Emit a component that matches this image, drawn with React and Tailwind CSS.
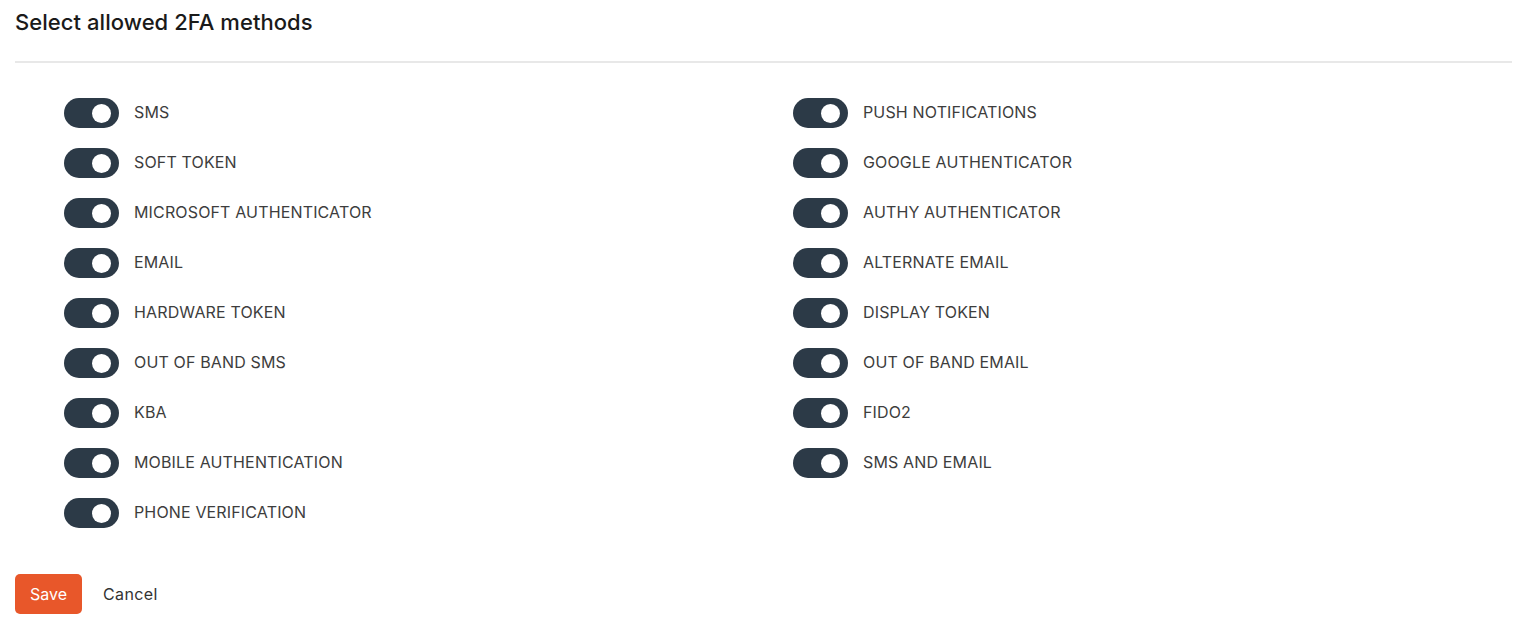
const left = [
  "SMS",
  "SOFT TOKEN",
  "MICROSOFT AUTHENTICATOR",
  "EMAIL",
  "HARDWARE TOKEN",
  "OUT OF BAND SMS",
  "KBA",
  "MOBILE AUTHENTICATION",
  "PHONE VERIFICATION",
]

const right = [
  "PUSH NOTIFICATIONS",
  "GOOGLE AUTHENTICATOR",
  "AUTHY AUTHENTICATOR",
  "ALTERNATE EMAIL",
  "DISPLAY TOKEN",
  "OUT OF BAND EMAIL",
  "FIDO2",
  "SMS AND EMAIL",
]

function Toggle() {
  return (
    <div className="w-[55px] h-[30px] rounded-full bg-[#2c3a47] flex items-center justify-end pr-[8px] shrink-0">
      <div className="w-[19px] h-[19px] rounded-full bg-white" />
    </div>
  )
}

function Row({ label }) {
  return (
    <div className="flex items-center h-[50px]">
      <Toggle />
      <span className="ml-[15px] pb-[2px] text-[16px] tracking-[0.15px] text-[#3d3d3d]">{label}</span>
    </div>
  )
}

export default function App() {
  return (
    <div className="bg-white px-[15px] font-['Inter',sans-serif] w-[1527px] h-[623px]">
      <h1 className="pt-[6px] h-[61px] text-[22px] font-medium text-[#1a1a1a] tracking-[0.05px]">
        Select allowed 2FA methods
      </h1>
      <div className="h-[2px] bg-[#e8e8e8]" />
      <div className="grid grid-cols-[729px_1fr] pl-[49px] pt-[25px]">
        <div className="flex flex-col">
          {left.map((l) => (
            <Row key={l} label={l} />
          ))}
        </div>
        <div className="flex flex-col">
          {right.map((l) => (
            <Row key={l} label={l} />
          ))}
        </div>
      </div>
      <div className="flex items-center mt-[36px]">
        <button className="w-[67px] h-[40px] rounded-[5px] bg-[#e8572a] text-white text-[16px]">Save</button>
        <button className="ml-[21px] text-[16px] tracking-[0.4px] text-[#333]">Cancel</button>
      </div>
    </div>
  )
}
